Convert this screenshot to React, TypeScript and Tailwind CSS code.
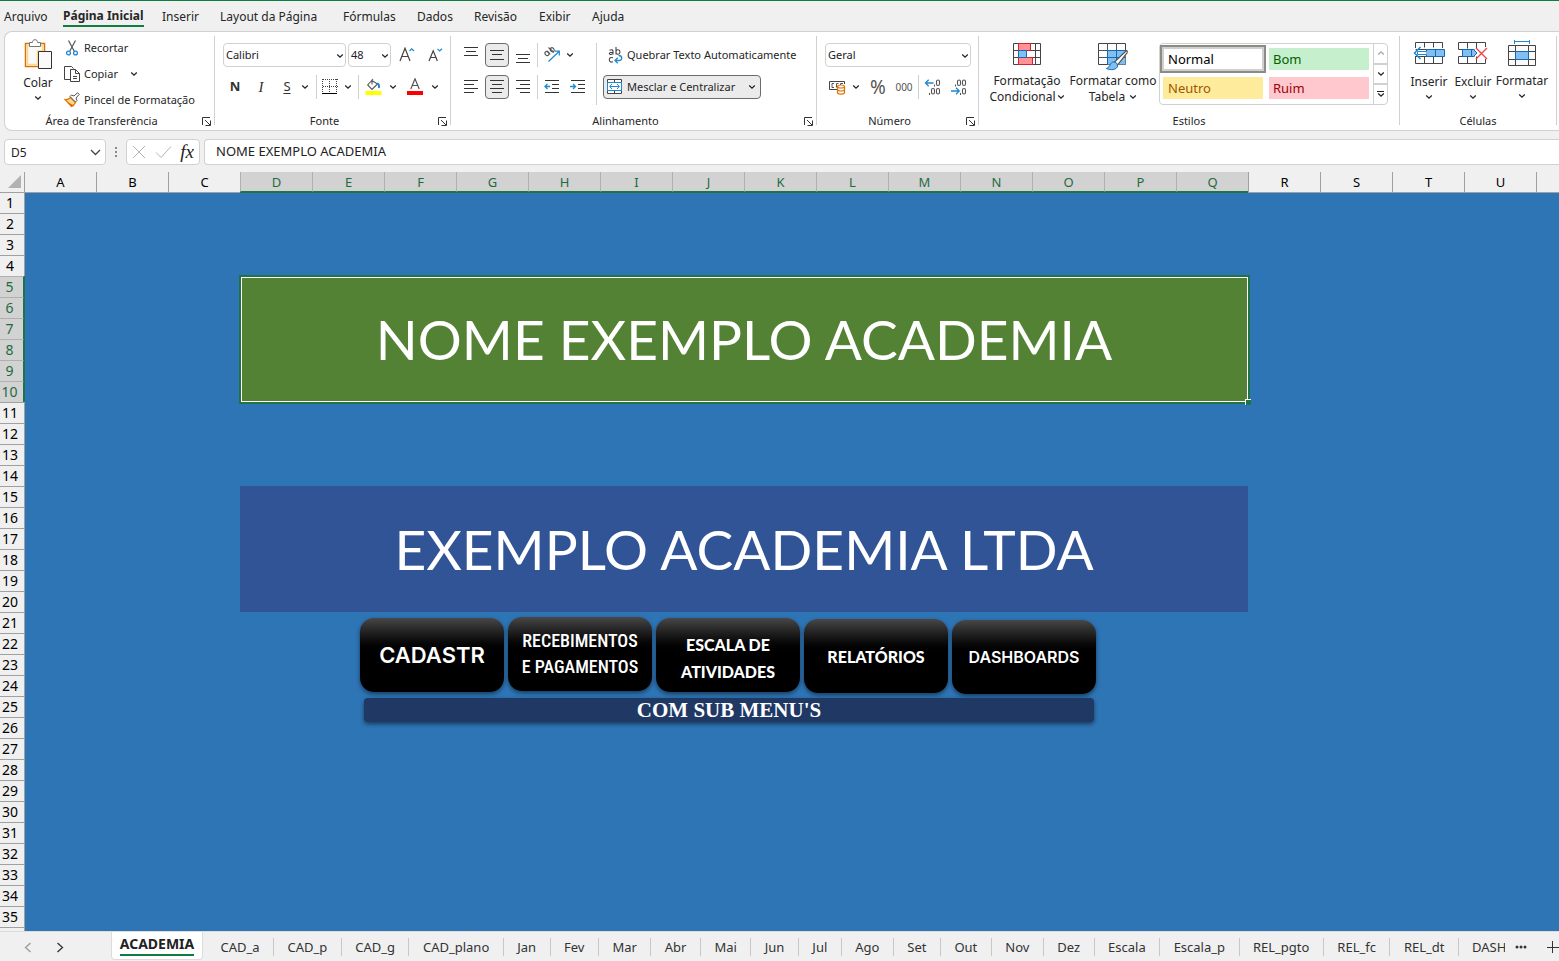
import { useState } from 'react';
import type { ReactNode } from 'react';

const columns = 'ABCDEFGHIJKLMNOPQRSTU'.split('');
const rows = Array.from({ length: 35 }, (_, i) => i + 1);

const menus = [
  { name: 'Arquivo', width: 'w-[59px]' },
  { name: 'Página Inicial', width: 'w-[99px]' },
  { name: 'Inserir', width: 'w-[58px]' },
  { name: 'Layout da Página', width: 'w-[123px]' },
  { name: 'Fórmulas', width: 'w-[74px]' },
  { name: 'Dados', width: 'w-[57px]' },
  { name: 'Revisão', width: 'w-[65px]' },
  { name: 'Exibir', width: 'w-[53px]' },
  { name: 'Ajuda', width: 'w-[54px]' },
];

const sheets = [
  'CAD_a', 'CAD_p', 'CAD_g', 'CAD_plano', 'Jan', 'Fev', 'Mar', 'Abr', 'Mai', 'Jun', 'Jul', 'Ago',
  'Set', 'Out', 'Nov', 'Dez', 'Escala', 'Escala_p', 'REL_pgto', 'REL_fc', 'REL_dt',
];

function Chevron({ className = '' }: { className?: string }) {
  return (
    <svg className={className} width="8" height="6" viewBox="0 0 8 6" fill="none" stroke="#262626" strokeWidth="1.3">
      <path d="M1.2 1.5 4 4.2 6.8 1.5" />
    </svg>
  );
}

function Separator({ className = 'h-6' }: { className?: string }) {
  return <div className={`w-px shrink-0 bg-[#d0d0d0] ${className}`} />;
}

function Launcher() {
  return (
    <button type="button" aria-label="Mais opções" className="absolute right-[3px] top-1">
      <svg width="9" height="9" viewBox="0 0 9 9" fill="none" stroke="#333" strokeWidth="1">
        <path d="M.5 8V.5H8M8.500 3.500v5h-5M3 3l5 5" />
      </svg>
    </button>
  );
}

interface GroupProps {
  label: string;
  width: string;
  launcher?: boolean;
  children: ReactNode;
}

function Group({ label, width, launcher, children }: GroupProps) {
  return (
    <>
      <section className={`flex shrink-0 flex-col ${width}`}>
        <div className="h-[81px]">{children}</div>
        <div className={`relative text-center text-[11px] leading-4 ${launcher ? 'pr-4' : ''}`}>
          {label}
          {launcher && <Launcher />}
        </div>
      </section>
      <Separator className="mt-1 h-[89px]" />
    </>
  );
}

interface IconButtonProps {
  label: string;
  className?: string;
  active?: boolean;
  children: ReactNode;
}

function IconButton({ label, className = 'w-6', active, children }: IconButtonProps) {
  return (
    <button
      type="button"
      aria-label={label}
      className={`flex h-6 shrink-0 items-center justify-center rounded ${className} ${
        active ? 'border border-[#6b6b6b] bg-[#ebebeb]' : ''
      }`}
    >
      {children}
    </button>
  );
}

interface DropdownProps {
  label: string;
  width: string;
  options: string[];
}

function Dropdown({ label, width, options }: DropdownProps) {
  return (
    <div className={`relative shrink-0 ${width}`}>
      <select
        aria-label={label}
        className="block h-6 w-full appearance-none rounded border border-[#d1d1d1] bg-white pl-[2px] text-[11px] text-[#222]"
      >
        {options.map((option) => (
          <option key={option}>{option}</option>
        ))}
      </select>
      <Chevron className="pointer-events-none absolute right-[2px] top-[10px]" />
    </div>
  );
}

// each line is [x1, x2, y] inside a 16px box
function Lines({ lines, children }: { lines: number[][]; children?: ReactNode }) {
  return (
    <svg width="16" height="16" viewBox="0 0 16 16" fill="none" stroke="#333">
      {lines.map(([x1, x2, y]) => (
        <path key={y} d={`M${x1} ${y}.5H${x2}`} />
      ))}
      {children}
    </svg>
  );
}

function PasteIcon() {
  return (
    <svg width="28" height="31" viewBox="0 0 28 31" fill="none">
      <path d="M7 4.500H1.500v23h13" stroke="#e07000" strokeWidth="1.5" />
      <path d="M15 4.500h5.500V12" stroke="#e07000" strokeWidth="1.5" />
      <path d="M3.500 6.500h15V12h-5v13.500h-10z" fill="#fafafa" stroke="#fbd98b" strokeWidth="1.500" />
      <path d="M5.500 7.500v-4h3C8.500 1.500 9.500.7 11 .7s2.500.8 2.500 2.800h3v4z" fill="#fff" stroke="#777" />
      <path d="M14.500 12.500h13v17h-13z" fill="#fafafa" stroke="#333" />
    </svg>
  );
}

function ScissorsIcon() {
  return (
    <svg width="16" height="16" viewBox="0 0 16 16" fill="none">
      <path d="m4.500.5 5.800 10.700M11.500.5 5.700 11.200" stroke="#555" strokeWidth="1.200" />
      <circle cx="4.500" cy="13" r="1.900" stroke="#1e88d2" strokeWidth="1.300" />
      <circle cx="11.500" cy="13" r="1.900" stroke="#1e88d2" strokeWidth="1.300" />
    </svg>
  );
}

function CopyIcon() {
  return (
    <svg width="16" height="16" viewBox="0 0 16 16" fill="none" stroke="#444">
      <path d="M6 13.500H.5V.5h7l2 2" />
      <path d="M6.500 3.500h5l4 4v8h-9zM11.500 3.500v4h4M9 10.500h4M9 12.500h4" fill="#fff" />
    </svg>
  );
}

function BrushIcon() {
  return (
    <svg width="16" height="16" viewBox="0 0 16 16" fill="none">
      <path d="M1 7.500c3 .5 4-.5 5.500-2l5 5c-1 2-2.500 3.500-4 4z" fill="#fbd98b" stroke="#e07000" strokeWidth="1.200" />
      <path d="m3 10 6.500 3-2 2z" fill="#e07000" />
      <path d="m6 4.500 1.500-1.500 2.500 1L13.500.7l1.700 1.700L12 6l1 2.500-1.500 1.500z" fill="#fff" stroke="#555" />
    </svg>
  );
}

function BordersIcon() {
  return (
    <svg width="16" height="16" viewBox="0 0 16 16" fill="none" stroke="#444">
      <path d="M1 .5h15M1 7.500h15M.5 0v13M7.500 0v13M14.500 0v13" strokeDasharray="1 1" />
      <path d="M0 14.500h15" stroke="#000" />
    </svg>
  );
}

function BucketIcon() {
  return (
    <svg width="17" height="18" viewBox="0 0 17 18" fill="none">
      <path d="m8 1-5.300 6 4.300 4.500L12.500 6 7 2.500v4" stroke="#555" strokeWidth="1.100" />
      <path d="M12 5.500c2 .5 2.500 2 1.800 4.500" stroke="#1e88d2" strokeWidth="2" />
      <path d="M.5 13h16v4H.5z" fill="#ff0" />
    </svg>
  );
}

function FontColorIcon() {
  return (
    <svg width="16" height="18" viewBox="0 0 16 18" fill="none">
      <path d="M3.800 11 8 .8 12.200 11M5.200 7.500h5.600" stroke="#555" strokeWidth="1.200" />
      <path d="M0 13h16v4H0z" fill="#f00" />
    </svg>
  );
}

function GrowFontIcon() {
  return (
    <svg width="16" height="16" viewBox="0 0 16 16" fill="none">
      <path d="M1 14 6 1.200 11 14M2.700 9.500h6.600" stroke="#444" strokeWidth="1.200" />
      <path d="m10.500 4 2.200-2.200L15 4" stroke="#1e88d2" strokeWidth="1.200" />
    </svg>
  );
}

function ShrinkFontIcon() {
  return (
    <svg width="16" height="16" viewBox="0 0 16 16" fill="none">
      <path d="M2 14 6.200 3.800 10.400 14M3.500 10.500h5.400" stroke="#444" strokeWidth="1.200" />
      <path d="m10.500 1.800 2.200 2.200L15 1.800" stroke="#1e88d2" strokeWidth="1.200" />
    </svg>
  );
}

function OrientationIcon() {
  return (
    <svg width="18" height="18" viewBox="0 0 18 18" fill="none">
      <g stroke="#555" strokeWidth="1.100">
        <ellipse cx="4" cy="7.500" rx="2.200" ry="1.800" transform="rotate(45 4 7.500)" />
        <path d="m4 5 3.300 3.300M5.500 1.500l5.500 5" />
        <ellipse cx="9.300" cy="3.800" rx="2.200" ry="1.800" transform="rotate(45 9.300 3.800)" />
      </g>
      <path d="M5.500 15.500 16 5.500M12 5.200h4.300v4.300" stroke="#1e88d2" strokeWidth="1.200" />
    </svg>
  );
}

function WrapIcon() {
  return (
    <svg width="16" height="17" viewBox="0 0 16 17" fill="none">
      <g stroke="#444" strokeWidth="1.100">
        <path d="M1.500 3.200c2.500-1 3.500-.3 3.500 1.300v3M5 5.200c-2.500 0-3.600.4-3.600 1.400 0 1.200 2.600 1.200 3.600-.4" />
        <path d="M8 0v7.500M8 5.500c.3 2.500 4 2.300 4-.5s-3.700-3-4-.5M5 10.700c-2.500-.8-3.700.3-3.700 2.100s1.500 2.800 3.700 2" />
      </g>
      <path d="M10.500 8.500c4-.2 4.500 5 .5 5H7M9.700 10.800 7 13.500l2.700 2.700" stroke="#1e88d2" strokeWidth="1.300" />
    </svg>
  );
}

function MergeIcon() {
  return (
    <svg className="shrink-0" width="16" height="16" viewBox="0 0 16 16" fill="none">
      <path d="M.5.5h14v14H.5zM7.500.5v3M7.500 11.500v3" fill="#fff" stroke="#444" />
      <path d="M.5 3.500h14v8H.5z" fill="#fff" stroke="#1e88d2" />
      <path d="M3 7.500h9M5 5 2.700 7.500 5 10M10 5l2.300 2.500L10 10" stroke="#1e88d2" />
    </svg>
  );
}

function CurrencyIcon() {
  return (
    <svg width="18" height="15" viewBox="0 0 18 15" fill="none">
      <path d="M8 9.500H.5v-8h15V4" stroke="#444" />
      <path d="M5 3.500H3v4h2M7.500 7.500v-4h2M11.500 5V3.500H14" stroke="#555" />
      <path d="M8.500 6.500v6c0 2.200 7 2.200 7 0v-6" fill="#fff" stroke="#e07000" strokeWidth="1.200" />
      <ellipse cx="12" cy="6.500" rx="3.500" ry="1.500" fill="#fff" stroke="#e07000" strokeWidth="1.200" />
      <path d="M8.500 9.500c0 2 7 2 7 0" stroke="#e07000" strokeWidth="1.200" />
    </svg>
  );
}

function DecimalIcon({ more }: { more?: boolean }) {
  return (
    <svg width="18" height="16" viewBox="0 0 18 16" fill="none">
      <g stroke="#555" strokeWidth="1.100">
        {more ? (
          <>
            <rect x="12.500" y="1" width="3" height="5.500" rx="1.500" />
            <rect x="7.500" y="9.500" width="3" height="5.500" rx="1.500" />
            <rect x="12.500" y="9.500" width="3" height="5.500" rx="1.500" />
            <path d="M10.500 5.500v2M5.500 14v2" />
          </>
        ) : (
          <>
            <rect x="7.500" y="1" width="3" height="5.500" rx="1.500" />
            <rect x="12.500" y="1" width="3" height="5.500" rx="1.500" />
            <rect x="12.500" y="9.500" width="3" height="5.500" rx="1.500" />
            <path d="M5.500 5.500v2M10.500 14v2" />
          </>
        )}
      </g>
      {more ? (
        <path d="M9.500 4H1.500M4.700.8 1.500 4l3.200 3.200" stroke="#1e88d2" strokeWidth="1.300" />
      ) : (
        <path d="M1 12h8M6 8.800 9.200 12 6 15.200" stroke="#1e88d2" strokeWidth="1.300" />
      )}
    </svg>
  );
}

function ConditionalIcon() {
  return (
    <svg width="28" height="22" viewBox="0 0 28 22" fill="none">
      <path d="M.5.5h27v21H.5zM.5 7.500h27M.5 14.500h27M5.500 0v22M22.500 0v22" fill="#fff" stroke="#444" />
      <path d="M5.500.5h12v7h-12zM5.500 14.500h14v7h-14z" fill="#ff9296" stroke="#d8232a" />
      <path d="M5.500 7.500h8v7h-8z" fill="#83beec" stroke="#0f6cbd" />
    </svg>
  );
}

function FormatTableIcon() {
  return (
    <svg width="32" height="28" viewBox="0 0 32 28" fill="none">
      <path d="M1.500.5h27v21h-27z" fill="#fff" stroke="#444" />
      <path d="M10.500 7.500h18v14h-18z" fill="#83beec" />
      <path d="M1.500 7.500h27M1.500 14.500h27M10.500 0v22M19.500 0v22" stroke="#555" />
      <path d="M10.500 7.500h18M10.500 7.500v14M19.500 7.500v14M10.500 14.500h18" stroke="#0f6cbd" />
      <path d="M29.500 7.500c1 .5 1 1.500.5 2.300L20.500 22l-3-3z" fill="#fff" stroke="#555" strokeWidth="1.200" />
      <path d="M16.500 19c-3.500 0-3 5-7 6.500 4 2 10.500 1.500 11-2.500.3-2.200-1.500-4-4-4z" fill="#83beec" stroke="#0f6cbd" />
    </svg>
  );
}

function InsertCellsIcon() {
  return (
    <svg width="32" height="26" viewBox="0 0 32 26" fill="none">
      <path d="M2.500 9V3.500h27V9M11.500 3.500v5M20.500 3.500v5M2.500 17v7.500h27V17M11.500 17v7.500M20.500 17v7.500M2.500 17.500h27M2.500 10.500h27" stroke="#444" />
      <path d="M13.500 10.500h18v7h-18zM22.500 10.500v7" fill="#83beec" stroke="#0f6cbd" />
      <path d="M13.500 12.500h-9v3h9" fill="#fff" stroke="#1e88d2" />
      <path d="M7.500 8 1.500 14l6 6" stroke="#1e88d2" strokeWidth="1.500" />
    </svg>
  );
}

function DeleteCellsIcon() {
  return (
    <svg width="30" height="26" viewBox="0 0 30 26" fill="none">
      <path d="M.5 10.500v-7h27V8M9.500 3.500v6M18.500 3.500v6M.5 10.500h16M.5 17.500v7h27V20M9.500 17.500v7M18.500 17.500v7M.5 17.500h16" stroke="#444" />
      <path d="M4.500 10.500h11l3.500 3.500-3.500 3.500h-11zM13.500 10.500v7" fill="#83beec" stroke="#0f6cbd" />
      <path d="m18 9 11 11M29 9 18 20" stroke="#f0444c" strokeWidth="1.400" />
    </svg>
  );
}

function FormatCellsIcon() {
  return (
    <svg width="28" height="28" viewBox="0 0 28 28" fill="none">
      <path d="M.5 6.500h27v20H.5zM7.500 6v21M20.500 6v21M.5 12.500h27M.5 20.500h27" stroke="#444" fill="#fafafa" />
      <path d="M7.500 12.500h13v8h-13z" fill="#83beec" stroke="#0f6cbd" />
      <path d="M6.500 1v4M21.500 1v4M6.500 2.500h15" stroke="#1e88d2" />
    </svg>
  );
}

function ClipboardGroup() {
  return (
    <Group label="Área de Transferência" width="w-[209px]" launcher>
      <div className="flex pt-[3px]">
        <button type="button" className="flex w-[59px] flex-col items-center gap-1 pl-[7px] pt-1 text-[12px] leading-4">
          <PasteIcon />
          <span className="mt-px">Colar</span>
          <Chevron />
        </button>
        <div className="flex flex-col items-start text-[11px]">
          <button type="button" className="flex h-[26px] items-center gap-1">
            <ScissorsIcon />
            Recortar
          </button>
          <button type="button" className="flex h-[26px] items-center gap-1">
            <CopyIcon />
            Copiar
            <Chevron className="ml-2" />
          </button>
          <button type="button" className="flex h-[26px] items-center gap-1">
            <BrushIcon />
            Pincel de Formatação
          </button>
        </div>
      </div>
    </Group>
  );
}

function FontGroup() {
  return (
    <Group label="Fonte" width="w-[235px]" launcher>
      <div className="flex flex-col gap-2 pl-2 pt-[11px]">
        <div className="flex gap-[2px]">
          <Dropdown label="Fonte" width="w-[123px]" options={['Calibri', 'Arial']} />
          <Dropdown label="Tamanho da fonte" width="w-[43px]" options={['48', '72']} />
          <IconButton label="Aumentar tamanho da fonte" className="w-7">
            <GrowFontIcon />
          </IconButton>
          <IconButton label="Diminuir tamanho da fonte">
            <ShrinkFontIcon />
          </IconButton>
        </div>
        <div className="flex items-center text-[14px] text-[#333]">
          <IconButton label="Negrito">
            <span className="text-[13px] font-bold">N</span>
          </IconButton>
          <IconButton label="Itálico" className="w-7">
            <span className="font-['Liberation_Serif',serif] text-[15px] italic">I</span>
          </IconButton>
          <IconButton label="Sublinhado">
            <span className="text-[13px] underline underline-offset-2">S</span>
          </IconButton>
          <IconButton label="Opções de sublinhado" className="w-3">
            <Chevron />
          </IconButton>
          <Separator className="ml-[5px] mr-[5px] h-6" />
          <IconButton label="Bordas" className="w-4">
            <BordersIcon />
          </IconButton>
          <IconButton label="Opções de bordas" className="w-5">
            <Chevron />
          </IconButton>
          <Separator />
          <IconButton label="Cor de preenchimento" className="w-7">
            <BucketIcon />
          </IconButton>
          <IconButton label="Opções de preenchimento" className="w-3">
            <Chevron />
          </IconButton>
          <IconButton label="Cor da fonte" className="w-8">
            <FontColorIcon />
          </IconButton>
          <IconButton label="Opções de cor da fonte" className="w-2">
            <Chevron />
          </IconButton>
        </div>
      </div>
    </Group>
  );
}

function AlignmentGroup() {
  return (
    <Group label="Alinhamento" width="w-[365px]" launcher>
      <div className="flex pl-2 pt-[11px]">
        <div className="flex w-[137px] flex-col gap-2">
          <div className="flex gap-[2px]">
            <IconButton label="Alinhar em cima">
              <Lines lines={[[1, 15, 0], [3, 13, 4], [1, 15, 8]]} />
            </IconButton>
            <IconButton label="Alinhar no meio" active>
              <Lines lines={[[1, 15, 3], [3, 13, 7], [1, 15, 12]]} />
            </IconButton>
            <IconButton label="Alinhar embaixo">
              <Lines lines={[[1, 15, 7], [3, 13, 11], [1, 15, 15]]} />
            </IconButton>
            <Separator />
            <IconButton label="Orientação">
              <OrientationIcon />
            </IconButton>
            <IconButton label="Opções de orientação" className="w-2">
              <Chevron />
            </IconButton>
          </div>
          <div className="flex gap-[2px]">
            <IconButton label="Alinhar à esquerda">
              <Lines lines={[[1, 15, 1], [1, 11, 5], [1, 15, 9], [1, 11, 13]]} />
            </IconButton>
            <IconButton label="Centralizar" active>
              <Lines lines={[[1, 15, 1], [3, 13, 5], [1, 15, 9], [3, 13, 13]]} />
            </IconButton>
            <IconButton label="Alinhar à direita">
              <Lines lines={[[1, 15, 1], [5, 15, 5], [1, 15, 9], [5, 15, 13]]} />
            </IconButton>
            <Separator />
            <IconButton label="Diminuir recuo">
              <Lines lines={[[1, 15, 1], [8, 15, 5], [8, 15, 9], [1, 15, 13]]}>
                <path d="M6 7.500H1M3.500 5 1 7.500 3.500 10" stroke="#1e88d2" strokeWidth="1.300" />
              </Lines>
            </IconButton>
            <IconButton label="Aumentar recuo">
              <Lines lines={[[1, 15, 1], [8, 15, 5], [8, 15, 9], [1, 15, 13]]}>
                <path d="M0 7.500h5M3 5l2.500 2.500L3 10" stroke="#1e88d2" strokeWidth="1.300" />
              </Lines>
            </IconButton>
          </div>
        </div>
        <Separator className="h-[62px]" />
        <div className="flex flex-col items-start gap-2 pl-[6px] text-[11px]">
          <button type="button" className="flex h-6 items-center gap-[3px] whitespace-nowrap pl-[5px]">
            <WrapIcon />
            Quebrar Texto Automaticamente
          </button>
          <button
            type="button"
            className="flex h-6 w-[158px] items-center gap-1 whitespace-nowrap rounded border border-[#6b6b6b] bg-[#ebebeb] pl-[3px] pr-1"
          >
            <MergeIcon />
            <span>Mesclar e Centralizar</span>
            <Chevron className="ml-auto shrink-0" />
          </button>
        </div>
      </div>
    </Group>
  );
}

function NumberGroup() {
  return (
    <Group label="Número" width="w-[161px]" launcher>
      <div className="flex flex-col gap-2 pl-2 pt-[11px]">
        <Dropdown label="Formato de número" width="w-[146px]" options={['Geral', 'Número', 'Moeda']} />
        <div className="flex items-center text-[#555]">
          <IconButton label="Formato de contabilização" className="w-[25px]">
            <CurrencyIcon />
          </IconButton>
          <IconButton label="Opções de contabilização" className="w-3">
            <Chevron />
          </IconButton>
          <IconButton label="Porcentagem" className="w-8">
            <span className="text-[19px]">%</span>
          </IconButton>
          <IconButton label="Separador de milhares" className="w-[20px]">
            <span className="text-[10px]">000</span>
          </IconButton>
          <Separator className="ml-1 mr-[2px] h-6" />
          <IconButton label="Aumentar casas decimais">
            <DecimalIcon more />
          </IconButton>
          <IconButton label="Diminuir casas decimais" className="ml-[2px] w-6">
            <DecimalIcon />
          </IconButton>
        </div>
      </div>
    </Group>
  );
}

function StylesGroup() {
  return (
    <Group label="Estilos" width="w-[420px]">
      <div className="flex pl-[7px] pt-[11px] text-[12px] leading-4">
        <button type="button" className="flex w-[82px] flex-col items-center">
          <ConditionalIcon />
          <span className="mt-2">Formatação</span>
          <span className="flex items-center gap-px">
            Condicional
            <Chevron />
          </span>
        </button>
        <button type="button" className="flex w-[90px] flex-col items-center">
          <span className="h-[30px]">
            <FormatTableIcon />
          </span>
          <span className="whitespace-nowrap">Formatar como</span>
          <span className="flex items-center gap-1">
            Tabela
            <Chevron />
          </span>
        </button>
        <div className="ml-px flex h-[62px] rounded border border-[#d1d1d1] text-[13px]">
          <div className="grid grid-cols-[106px_100px] content-start items-center gap-x-[3px] gap-y-1 pr-1 pt-px">
            <button
              type="button"
              className="h-7 border-2 border-[#8c8c86] bg-white pl-[6px] text-left text-black outline-2 -outline-offset-4 outline-[#d2d0ce]"
            >
              Normal
            </button>
            <button type="button" className="h-[22px] bg-[#c6efce] pl-1 text-left text-[#006100]">
              Bom
            </button>
            <button type="button" className="mx-[3px] h-[22px] bg-[#ffeb9c] pl-[5px] text-left text-[#9c5700]">
              Neutro
            </button>
            <button type="button" className="h-[22px] bg-[#ffc7ce] pl-1 text-left text-[#9c0006]">
              Ruim
            </button>
          </div>
          <div className="flex w-[14px] flex-col border-l border-[#d1d1d1]">
            <button type="button" aria-label="Linha anterior" className="flex flex-1 items-center justify-center border-b-2 border-[#d1d1d1]">
              <Chevron className="rotate-180 opacity-40" />
            </button>
            <button type="button" aria-label="Próxima linha" className="flex flex-1 items-center justify-center border-b-2 border-[#d1d1d1]">
              <Chevron />
            </button>
            <button type="button" aria-label="Mais estilos" className="flex flex-1 flex-col items-center justify-center">
              <span className="h-px w-[7px] bg-[#222]" />
              <Chevron />
            </button>
          </div>
        </div>
      </div>
    </Group>
  );
}

function CellsGroup() {
  return (
    <Group label="Células" width="w-[156px]">
      <div className="flex pl-[7px] pt-[7px] text-[12px] leading-4">
        <button type="button" className="flex w-[44px] flex-col items-center">
          <InsertCellsIcon />
          <span className="mt-[9px]">Inserir</span>
          <Chevron className="mt-1" />
        </button>
        <button type="button" className="flex w-[44px] flex-col items-center">
          <DeleteCellsIcon />
          <span className="mt-[9px]">Excluir</span>
          <Chevron className="mt-1" />
        </button>
        <button type="button" className="flex w-[54px] flex-col items-center">
          <FormatCellsIcon />
          <span className="mt-[6px]">Formatar</span>
          <Chevron className="mt-1" />
        </button>
      </div>
    </Group>
  );
}

function FormulaBar() {
  const [formula, setFormula] = useState('NOME EXEMPLO ACADEMIA');

  return (
    <div className="mt-2 flex h-[26px] shrink-0 items-stretch pl-1 text-[12px] text-[#222]">
      <div className="relative w-[102px]">
        <input
          aria-label="Caixa de nome"
          defaultValue="D5"
          className="h-full w-full rounded border border-[#d1d1d1] bg-white pl-[6px]"
        />
        <svg className="absolute right-[5px] top-[10px]" width="11" height="7" viewBox="0 0 11 7" fill="none" stroke="#444" strokeWidth="1.300">
          <path d="m1 1 4.500 4.500L10 1" />
        </svg>
      </div>
      <svg className="w-5" viewBox="0 0 20 26" fill="#888">
        <path d="M9 8h2v2H9zM9 12h2v2H9zM9 16h2v2H9z" />
      </svg>
      <div className="flex w-[74px] items-center justify-between rounded border border-[#d1d1d1] bg-white px-[5px]">
        <button type="button" aria-label="Cancelar">
          <svg width="14" height="14" viewBox="0 0 14 14" fill="none" stroke="#b5b5b5">
            <path d="m1 1 12 12M13 1 1 13" />
          </svg>
        </button>
        <button type="button" aria-label="Inserir">
          <svg width="17" height="14" viewBox="0 0 17 14" fill="none" stroke="#b5b5b5">
            <path d="m1 7.500 5 5L16 1.500" />
          </svg>
        </button>
        <button type="button" className="font-['Liberation_Serif',serif] text-[19px] leading-5 italic text-[#222]">
          fx
        </button>
      </div>
      <input
        aria-label="Barra de fórmulas"
        value={formula}
        onChange={(e) => setFormula(e.target.value)}
        className="ml-1 min-w-0 flex-1 rounded-l border border-r-0 border-[#d1d1d1] bg-white pl-[11px] text-[13px]"
      />
    </div>
  );
}

function isSelectedColumn(column: string) {
  return column >= 'D' && column <= 'Q';
}

function isSelectedRow(row: number) {
  return row >= 5 && row <= 10;
}

function isMerged(row: number) {
  return isSelectedRow(row) || (row >= 15 && row <= 20);
}

interface CellProps {
  column: string;
  row: number;
}

// cells of the first row and column carry the line that closes the headers
function Cell({ column, row }: CellProps) {
  const top = row === 1 ? `border-t ${isSelectedColumn(column) ? 'border-t-[#217346]' : 'border-t-[#a0a0a0]'}` : '';
  const left = column === 'A' ? `border-l ${isSelectedRow(row) ? 'border-l-[#217346]' : 'border-l-[#a0a0a0]'}` : '';

  return <td className={`p-0 ${top} ${left}`} />;
}

function Worksheet() {
  const banners: Record<number, ReactNode> = {
    5: (
      <td colSpan={14} rowSpan={6} className="relative bg-[#548235] p-0 text-center align-middle">
        <div className="absolute -bottom-[2px] -left-px -right-[2px] -top-px border-2 border-[#217346]">
          <div className="h-full border border-white" />
        </div>
        <div className="absolute -bottom-[3px] -right-[3px] size-[6px] border-l border-t border-white bg-[#217346]" />
        NOME EXEMPLO ACADEMIA
      </td>
    ),
    15: (
      <td colSpan={14} rowSpan={6} className="bg-[#305496] p-0 text-center align-middle">
        EXEMPLO ACADEMIA LTDA
      </td>
    ),
  };

  return (
    <table className="w-full table-fixed border-separate border-spacing-0 font-['Lato',sans-serif] text-[55px] leading-none text-white">
      <thead>
        <tr className="h-5 font-['Noto_Sans',sans-serif] text-[13px] text-black">
          <th aria-label="Selecionar tudo" className="w-6 p-0">
            <svg className="ml-2" width="14" height="14" viewBox="0 0 14 14">
              <path d="M13 0v13H0z" fill="#b2b2b2" />
            </svg>
          </th>
          {columns.map((column) => (
            <th
              key={column}
              scope="col"
              className={`w-[72px] border-l p-0 pt-px font-normal ${
                isSelectedColumn(column)
                  ? 'border-b border-b-[#217346] border-l-[#b0b0b0] bg-[#d2d2d2] text-[#1e6b42]'
                  : 'border-l-[#a0a0a0]'
              }`}
            >
              {column}
            </th>
          ))}
          <th className="border-l border-[#a0a0a0] p-0" />
        </tr>
      </thead>
      <tbody>
        {rows.map((row) => (
          <tr key={row} className="h-[21px]">
            <th
              scope="row"
              className={`border-t p-0 pr-1 font-['Noto_Sans',sans-serif] text-[14px] font-normal ${
                isSelectedRow(row)
                  ? 'border-r border-r-[#217346] border-t-[#b0b0b0] bg-[#d2d2d2] text-[#1e6b42]'
                  : 'border-t-[#a0a0a0] bg-[#f0f0f0] text-black'
              }`}
            >
              {row}
            </th>
            {columns.slice(0, 3).map((column) => (
              <Cell key={column} column={column} row={row} />
            ))}
            {banners[row]}
            {!isMerged(row) && columns.slice(3, 17).map((column) => <Cell key={column} column={column} row={row} />)}
            {columns.slice(17).map((column) => (
              <Cell key={column} column={column} row={row} />
            ))}
            <Cell column="V" row={row} />
          </tr>
        ))}
        <tr className="h-[21px]">
          <th className="border-t border-[#a0a0a0] bg-[#f0f0f0] p-0" />
          <td className="border-l border-[#a0a0a0] p-0" />
        </tr>
      </tbody>
    </table>
  );
}

interface ShapeButtonProps {
  className: string;
  children: ReactNode;
}

function ShapeButton({ className, children }: ShapeButtonProps) {
  return (
    <button
      type="button"
      className={`h-[74px] w-36 rounded-[14px] bg-linear-to-b from-[#484848] to-black to-50% text-white shadow-[0_2px_4px_rgba(0,0,0,0.5)] ${className}`}
    >
      {children}
    </button>
  );
}

// shapes float over the cells, like drawing objects on the sheet
function SheetShapes() {
  return (
    <>
      <div className="absolute left-[360px] top-[445px] flex items-start gap-1">
        <ShapeButton className="mt-px font-['Inter',sans-serif] text-[22px] font-semibold">CADASTR</ShapeButton>
        <ShapeButton className="font-['Roboto_Condensed',sans-serif] text-[18px] leading-[26px] font-medium">
          RECEBIMENTOS
          <br />E PAGAMENTOS
        </ShapeButton>
        <ShapeButton className="mt-px pt-[6px] font-['Lato',sans-serif] text-[16px] leading-[27px] font-black">
          ESCALA DE
          <br />
          ATIVIDADES
        </ShapeButton>
        <ShapeButton className="mt-[2px] pt-[2px] font-['Lato',sans-serif] text-[16px] font-black">RELATÓRIOS</ShapeButton>
        <ShapeButton className="mt-[3px] font-['Inter',sans-serif] text-[16px] font-semibold">DASHBOARDS</ShapeButton>
      </div>
      <button
        type="button"
        className="absolute left-[364px] top-[526px] h-6 w-[730px] rounded bg-[#203864] font-['Liberation_Serif',serif] text-[21px] leading-6 font-bold text-white shadow-[0_2px_4px_rgba(0,0,0,0.5)]"
      >
        COM SUB MENU'S
      </button>
    </>
  );
}

function SheetTabs() {
  return (
    <nav aria-label="Planilhas" className="flex h-[30px] shrink-0 items-start border-t border-[#dcdcdc] text-[13px] text-[#333]">
      <div className="flex h-[30px] w-[111px] items-center pl-6">
        <button type="button" aria-label="Planilha anterior" className="w-8">
          <svg width="8" height="11" viewBox="0 0 8 11" fill="none" stroke="#999" strokeWidth="1.300">
            <path d="M6.500 1 1.500 5.500l5 4.500" />
          </svg>
        </button>
        <button type="button" aria-label="Próxima planilha">
          <svg width="8" height="11" viewBox="0 0 8 11" fill="none" stroke="#333" strokeWidth="1.300">
            <path d="m1.500 1 5 4.500-5 4.500" />
          </svg>
        </button>
      </div>
      <button type="button" className="flex h-7 w-[92px] items-center justify-center rounded-b border border-t-0 border-[#dcdcdc] bg-white pb-[2px] text-[14px] font-bold text-[#222]">
        <span className="border-b-2 border-[#107c41] leading-5">ACADEMIA</span>
      </button>
      <div className="flex h-[30px] min-w-0 flex-1 items-center overflow-hidden pl-[3px]">
        {sheets.map((sheet, i) => (
          <button
            key={sheet}
            type="button"
            className={`h-[18px] grow border-l leading-[18px] ${i === 0 ? 'border-transparent' : 'border-[#c8c8c8]'}`}
          >
            {sheet}
          </button>
        ))}
        <button type="button" className="h-[18px] w-[47px] overflow-hidden border-l border-[#c8c8c8] pl-[13px] text-left leading-[18px]">
          DASH
        </button>
      </div>
      <button type="button" aria-label="Mais planilhas" className="flex h-[30px] w-8 items-center justify-center">
        <svg width="12" height="4" viewBox="0 0 12 4" fill="#333">
          <circle cx="2" cy="2" r="1.500" />
          <circle cx="6" cy="2" r="1.500" />
          <circle cx="10" cy="2" r="1.500" />
        </svg>
      </button>
      <button type="button" aria-label="Nova planilha" className="flex h-[30px] w-[22px] items-center justify-end">
        <svg width="12" height="12" viewBox="0 0 12 12" stroke="#333">
          <path d="M5.500 0v12M0 6.500h12" />
        </svg>
      </button>
    </nav>
  );
}

export default function App() {
  return (
    <div className="flex h-screen flex-col overflow-hidden border-t border-[#107c41] bg-[#f0f0f0] font-['Noto_Sans',sans-serif] text-[#262626]">
      <nav aria-label="Faixa de opções" className="flex h-[30px] shrink-0 items-center pl-1 pt-px text-[12px]">
        {menus.map(({ name, width }) => (
          <button key={name} type="button" className={`shrink-0 whitespace-nowrap text-left ${width}`}>
            {name === 'Página Inicial' ? (
              <span className="inline-block border-b-2 border-[#107c41] font-bold">{name}</span>
            ) : (
              name
            )}
          </button>
        ))}
      </nav>

      <div className="ml-1 flex h-[100px] shrink-0 overflow-hidden rounded-l-lg border border-r-0 border-[#d1d1d1] bg-white">
        <ClipboardGroup />
        <FontGroup />
        <AlignmentGroup />
        <NumberGroup />
        <StylesGroup />
        <CellsGroup />
      </div>

      <FormulaBar />

      <main className="relative mt-[7px] min-h-0 flex-1 overflow-hidden">
        <div className="h-full bg-[#2e75b6] bg-[linear-gradient(#f0f0f0_0_20px,transparent_20px)]">
          <Worksheet />
        </div>
        <SheetShapes />
      </main>

      <SheetTabs />
    </div>
  );
}
